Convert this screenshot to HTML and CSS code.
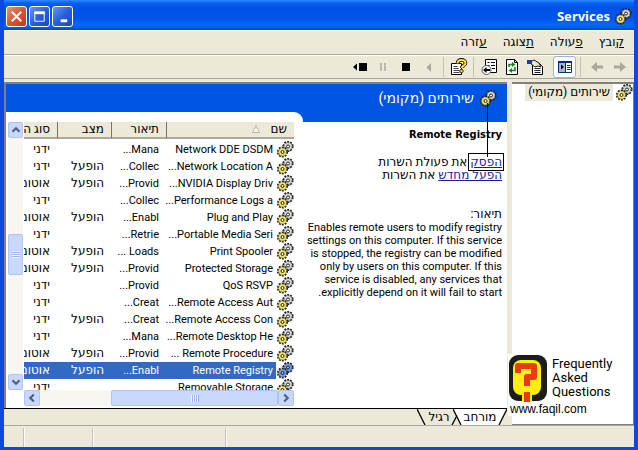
FILE: index.html
```html
<!DOCTYPE html>
<html lang="he" dir="rtl">
<head>
<meta charset="utf-8">
<title>Services</title>
<link rel="stylesheet" href="styles.css">
</head>
<body>
<svg class="defs" aria-hidden="true">
  <symbol id="gears" viewBox="0 0 17 17">
    <circle cx="11" cy="5.5" r="4.6" fill="none" stroke="#222" stroke-width="2" stroke-dasharray="1.8 1.1"/>
    <circle cx="11" cy="5.5" r="4" fill="#d8d8d8" stroke="#333" stroke-width=".7" stroke-dasharray="2 1"/>
    <circle cx="11" cy="5.5" r="1.5" fill="#fff" stroke="#222" stroke-width="1"/>
    <circle cx="5.5" cy="11" r="4.6" fill="none" stroke="#222" stroke-width="2" stroke-dasharray="1.8 1.1"/>
    <circle cx="5.5" cy="11" r="4" fill="#f3e35c" stroke="#55501a" stroke-width=".7" stroke-dasharray="2 1"/>
    <circle cx="5.5" cy="11" r="1.5" fill="#fff" stroke="#222" stroke-width="1"/>
  </symbol>
  <symbol id="chev" viewBox="0 0 10 10"><path d="M1.5 6.8 5 3.3l3.5 3.5" fill="none" stroke="#4d6185" stroke-width="2.2"/></symbol>
</svg>
<div class="window">
  <header class="titlebar">
    <svg class="gear"><use href="#gears"/></svg>
    <h1>Services</h1>
    <div class="winbtns">
      <button class="winbtn" aria-label="מזער"><svg viewBox="0 0 20 20"><path d="M8 14.5h7" stroke="#fff" stroke-width="3"/></svg></button>
      <button class="winbtn" aria-label="הגדל"><svg viewBox="0 0 20 20"><path d="M5 6h10v9H5z" fill="none" stroke="#fff"/><path d="M4.500 6h11" stroke="#fff" stroke-width="3"/></svg></button>
      <button class="winbtn close" aria-label="סגור"><svg viewBox="0 0 20 20"><path d="m5 5 10 10M15 5 5 15" stroke="#fff" stroke-width="2.200"/></svg></button>
    </div>
  </header>
  <nav class="menubar">
    <button><u>ק</u>ובץ</button><button><u>פ</u>עולה</button><button><u>ת</u>צוגה</button><button><u>ע</u>זרה</button>
  </nav>
  <div class="toolbar">
    <button aria-label="קדימה"><svg viewBox="0 0 18 18"><path d="M3 7.500h6V4l6 5-6 5v-3.500H3z" fill="#aca899"/></svg></button>
    <button aria-label="אחורה"><svg viewBox="0 0 18 18"><path d="M15 7.500H9V4L3 9l6 5v-3.500h6z" fill="#aca899"/></svg></button>
    <span class="sep"></span>
    <button class="pressed" aria-label="הצג עץ"><svg viewBox="0 0 18 18"><path d="M2.500 3.500h13v11h-13z" fill="#fff" stroke="#112a78"/><path d="M2 3h14v2H2z" fill="#112a78"/><path d="M3 5h6v9H3z" fill="#aab4cc"/><path d="M9.500 4v10" stroke="#112a78"/><path d="M5 6.500v5L8 9z" fill="#000"/><path d="M11 7.500h3.500M11 9.500h3.500M11 11.500h3.500" stroke="#112a78"/></svg></button>
    <span class="space"></span>
    <button aria-label="מאפיינים"><svg viewBox="0 0 18 18"><path d="M6.500 5.500h7l3 3v8h-10z" fill="#fff" stroke="#000"/><path d="M8.500 10.500h6M8.500 12.500h6M8.500 14.500h6" stroke="#222"/><path d="m4 4 4-2 5 3 2 4-3-1-3 1-4-3z" fill="#eee8cf" stroke="#000" stroke-width=".9"/><path d="M1 2h5v4H1z" fill="#1e3c99"/></svg></button>
    <button aria-label="רענן"><svg viewBox="0 0 18 18"><path d="M3.500 1.500h8l3 3v12h-11z" fill="#fff" stroke="#000"/><path d="M11.500 1.500v3h3" fill="none" stroke="#000"/><path d="M6 9V6.500h4M12 9v3.500H8" fill="none" stroke="#168416" stroke-width="1.600"/><path d="m9 4 3.500 2.500L9 9zM9 10l-3.500 2.500L9 15z" fill="#168416"/></svg></button>
    <button aria-label="יצא רשימה"><svg viewBox="0 0 18 18"><path d="M5.500 1.500h11v13h-11z" fill="#fff" stroke="#000"/><path d="M7.500 4.500h2M11 4.500h4M7.500 7.500h2M11 7.500h4M12 10.500h3" stroke="#000"/><circle cx="6.500" cy="12" r="4.500" fill="#fff" stroke="#555"/><path d="M3 12l3.500-3v2H10v2H6.500v2z" fill="#000"/></svg></button>
    <span class="sep tight"></span>
    <button aria-label="עזרה"><svg viewBox="0 0 18 18"><path d="M1.500 5.500h10v11h-10z" fill="#fff" stroke="#000"/><path d="M3.500 8.500h4M3.500 10.500h5M3.500 12.500h6M3.500 14.500h6" stroke="#444"/><path d="M7.500 5.500c0-5 8-4.500 8-.5 0 3-4 2.500-4 5" fill="none" stroke="#000" stroke-width="3.600"/><path d="M7.500 5.500c0-5 8-4.500 8-.5 0 3-4 2.500-4 5" fill="none" stroke="#ffe92e" stroke-width="2"/><circle cx="11.500" cy="13" r="1.700" fill="#ffe92e" stroke="#000" stroke-width=".8"/></svg></button>
    <span class="sep tight"></span>
    <button aria-label="הפעל"><svg viewBox="0 0 18 18"><path d="M11 5v9L6.500 9.500z" fill="#aca899"/></svg></button>
    <button aria-label="הפסק"><svg viewBox="0 0 18 18"><path d="M5 5h8v8H5z"/></svg></button>
    <button aria-label="השהה"><svg viewBox="0 0 18 18"><path d="M6 5h2v8H6zM10 5h2v8h-2z" fill="#bdb9aa"/></svg></button>
    <button aria-label="הפעל מחדש"><svg viewBox="0 0 18 18"><path d="M8 5h8v8H8zM6 5.500v7L2 9z"/></svg></button>
  </div>
  <div class="workspace">
    <aside class="tree">
      <div class="node"><svg class="gear"><use href="#gears"/></svg><span>שירותים (מקומי)</span></div>
    </aside>
    <main class="main">
      <div class="pane">
        <div class="banner"><svg class="gear"><use href="#gears"/></svg><h2>שירותים (מקומי)</h2></div>
        <div class="split">
          <section class="details">
            <h3>Remote Registry</h3>
            <p class="actions"><a href="#" class="marked">הפסק</a> את פעולת השרות<br><a href="#">הפעל מחדש</a> את השרות</p>
            <p><span class="label">תיאור:</span><br>Enables remote users to modify registry<br>settings on this computer. If this service<br>is stopped, the registry can be modified<br>only by users on this computer. If this<br>service is disabled, any services that<br>explicitly depend on it will fail to start.</p>
          </section>
          <section class="list">
            <div class="viewport">
              <table>
                <colgroup><col class="c-icon"><col><col class="c-desc"><col class="c-status"><col class="c-type"></colgroup>
                <thead><tr><th colspan="2">שם <svg class="sort" viewBox="0 0 8 8"><path d="M4 .5.500 7.500h7z" fill="#f6f4ea" stroke="#bbb7a5"/></svg></th><th>תיאור</th><th>מצב</th><th>סוג הפעלה</th></tr></thead>
                <tbody>
                  <tr><td><svg class="gear"><use href="#gears"/></svg></td><td>Network DDE DSDM</td><td>Mana...</td><td></td><td>ידני</td></tr>
                  <tr><td><svg class="gear"><use href="#gears"/></svg></td><td>Network Location A...</td><td>Collec...</td><td>הופעל</td><td>ידני</td></tr>
                  <tr><td><svg class="gear"><use href="#gears"/></svg></td><td>NVIDIA Display Driv...</td><td>Provid...</td><td>הופעל</td><td>אוטומטי</td></tr>
                  <tr><td><svg class="gear"><use href="#gears"/></svg></td><td>Performance Logs a...</td><td>Collec...</td><td></td><td>ידני</td></tr>
                  <tr><td><svg class="gear"><use href="#gears"/></svg></td><td>Plug and Play</td><td>Enabl...</td><td>הופעל</td><td>אוטומטי</td></tr>
                  <tr><td><svg class="gear"><use href="#gears"/></svg></td><td>Portable Media Seri...</td><td>Retrie...</td><td></td><td>ידני</td></tr>
                  <tr><td><svg class="gear"><use href="#gears"/></svg></td><td>Print Spooler</td><td>Loads ...</td><td>הופעל</td><td>אוטומטי</td></tr>
                  <tr><td><svg class="gear"><use href="#gears"/></svg></td><td>Protected Storage</td><td>Provid...</td><td>הופעל</td><td>אוטומטי</td></tr>
                  <tr><td><svg class="gear"><use href="#gears"/></svg></td><td>QoS RSVP</td><td>Provid...</td><td></td><td>ידני</td></tr>
                  <tr><td><svg class="gear"><use href="#gears"/></svg></td><td>Remote Access Aut...</td><td>Creat...</td><td></td><td>ידני</td></tr>
                  <tr><td><svg class="gear"><use href="#gears"/></svg></td><td>Remote Access Con...</td><td>Creat...</td><td>הופעל</td><td>ידני</td></tr>
                  <tr><td><svg class="gear"><use href="#gears"/></svg></td><td>Remote Desktop He...</td><td>Mana...</td><td></td><td>ידני</td></tr>
                  <tr><td><svg class="gear"><use href="#gears"/></svg></td><td>Remote Procedure ...</td><td>Provid...</td><td>הופעל</td><td>אוטומטי</td></tr>
                  <tr class="selected"><td><svg class="gear"><use href="#gears"/></svg></td><td>Remote Registry</td><td>Enabl...</td><td>הופעל</td><td>אוטומטי</td></tr>
                  <tr><td><svg class="gear"><use href="#gears"/></svg></td><td>Removable Storage</td><td></td><td></td><td>ידני</td></tr>
                </tbody>
              </table>
            </div>
            <div class="vscroll">
              <button aria-label="למעלה"><svg><use href="#chev"/></svg></button>
              <div class="before"></div>
              <div class="thumb"></div>
              <div class="after"></div>
              <button aria-label="למטה"><svg class="down"><use href="#chev"/></svg></button>
            </div>
            <div class="hscroll">
              <button aria-label="ימינה"><svg class="right"><use href="#chev"/></svg></button>
              <div class="thumb"></div>
              <div class="after"></div>
              <button aria-label="שמאלה"><svg class="left"><use href="#chev"/></svg></button>
            </div>
          </section>
        </div>
      </div>
      <div class="tabs">
        <button class="tab active"><svg viewBox="0 0 54 17" preserveAspectRatio="none"><path d="M0 0l8 17h38l8-17z" fill="#fff"/><path d="M0 0l8 17M54 0l-8 17" stroke="#000" stroke-width="1.300"/></svg><span>מורחב</span></button>
        <button class="tab"><svg viewBox="0 0 44 17" preserveAspectRatio="none"><path d="M0 0l8 17M40 7l-5 10" stroke="#000" stroke-width="1.300"/></svg><span>רגיל</span></button>
      </div>
    </main>
    <div class="logo">
      <div class="logo-row">
        <svg viewBox="0 0 40 48"><rect x="1" y="1" width="38" height="46" rx="9" fill="#1d1d1b"/><rect x="5" y="6" width="28" height="35" rx="8" fill="#ffee12"/><path d="M10 19v-7h16v11h-7v9" fill="none" stroke="#e63a1b" stroke-width="6" stroke-linejoin="round"/><path d="M14 37h10v11H14z" fill="#ffee12"/><path d="M16 38h6v10h-6z" fill="#e63a1b"/></svg>
        <span>Frequently<br>Asked<br>Questions</span>
      </div>
      <div class="url">www.faqil.com</div>
    </div>
  </div>
  <footer class="status"><span class="fill"></span><span class="s1"></span><span class="s2"></span><span class="s3"></span></footer>
</div>
</body>
</html>
```
FILE: styles.css
```css
* { box-sizing: border-box; }
body {
  margin: 0;
  font: 11px/13px Roboto, "DejaVu Sans", sans-serif;
  color: #000;
}
button { font: inherit; color: inherit; border: 0; padding: 0; background: none; }
h1, h2, h3, p { margin: 0; font-size: inherit; }
.defs { position: absolute; width: 0; height: 0; }
.gear { width: 17px; height: 17px; flex: none; display: block; }

.window {
  height: 100vh;
  min-height: 300px;
  display: flex;
  flex-direction: column;
  border: solid #0a4adf;
  border-width: 0 4px 3px;
  background: #ece9d8;
  overflow: hidden;
}

.titlebar {
  height: 30px;
  flex: none;
  display: flex;
  align-items: center;
  gap: 5px;
  margin: 0 -4px;
  padding: 2px 6px 0 6px;
  background: linear-gradient(#2f8cff 0, #0a60f0 3px, #0052e4 8px, #0054e8 18px, #0468fd 25px, #0558e8 28px, #0340c0 30px);
}
.titlebar h1 {
  font: bold 13px/16px "Noto Sans", sans-serif;
  color: #fff;
  flex: 1;
}
.winbtns { display: flex; gap: 2px; }
.winbtn {
  width: 21px;
  height: 21px;
  border: 1px solid #fff;
  border-radius: 3px;
  background: linear-gradient(135deg, #6c93ee, #2a5ede 50%, #1746c4);
}
.winbtn svg { display: block; width: 19px; height: 19px; }
.winbtn.close { background: linear-gradient(135deg, #ee9274, #dc5330 50%, #c23a14); }

.menubar {
  height: 25px;
  flex: none;
  display: flex;
  gap: 16px;
  padding: 0 10px;
  border-top: 1px solid #fff;
  border-bottom: 1px solid #aca899;
  font-size: 12px;
}
.toolbar {
  height: 24px;
  flex: none;
  display: flex;
  align-items: center;
  padding: 0 3px;
  border-top: 1px solid #fff;
  border-bottom: 1px solid #aca899;
}
.toolbar button { width: 23px; height: 22px; display: grid; place-items: center; }
.toolbar svg { width: 18px; height: 18px; }
.toolbar .pressed { border: 1px solid #98b5e2; border-radius: 3px; background: #fff; }
.sep { width: 1px; height: 20px; margin: 0 4px; background: #c5c2b2; }
.sep.tight { margin: 0 3px; }
.space { width: 7px; }

.workspace {
  flex: 1;
  min-height: 0;
  display: flex;
  gap: 5px;
  margin-top: 3px;
  position: relative;
}
.tree {
  width: 122px;
  flex: none;
  background: #fff;
  border: 1px solid #808080;
  border-width: 2px 1px 1px 0;
}
.node { display: flex; gap: 3px; font-size: 12px; }
.node span { background: #ece9d8; padding: 1px 3px; line-height: 14px; height: 17px; white-space: nowrap; }
.main { flex: 1; min-width: 0; display: flex; flex-direction: column; }
.pane {
  flex: 1;
  min-height: 0;
  display: flex;
  flex-direction: column;
  border: solid #808080;
  border-width: 2px 0 0 2px;
}
.banner {
  height: 28px;
  flex: none;
  display: flex;
  align-items: center;
  gap: 6px;
  padding-right: 10px;
  background: #0054e3;
  color: #fff;
}
.banner h2 { font-weight: normal; font-size: 14px; }
.split {
  flex: 1;
  min-height: 0;
  display: flex;
  background: linear-gradient(#0054e3 10px, #fff 10px);
}
.details { width: 204px; flex: none; padding: 16px 5px 0 0; white-space: nowrap; }
.details h3 { font-family: "DejaVu Sans Condensed", sans-serif; font-size: 11px; }
.actions, .label { font-size: 12px; }
.actions { margin: 15px 0 26px; }
.actions a { color: #1a1a9c; }
.actions .marked { position: relative; outline: 1px solid #000; outline-offset: 1px; }
.marked::after {
  content: "";
  position: absolute;
  right: 14px;
  bottom: 12px;
  width: 1px;
  height: 54px;
  background: #000;
}

.list {
  flex: 1;
  min-width: 0;
  display: grid;
  grid-template: minmax(0, 1fr) 16px / minmax(0, 1fr) 15px;
  column-gap: 1px;
  padding: 10px 9px 2px 2px;
  background: #fff;
  border-top-right-radius: 9px;
}
.viewport { overflow: hidden; }
table { width: calc(100% + 37px); border-collapse: separate; border-spacing: 0; table-layout: fixed; white-space: nowrap; }
.c-icon { width: 18px; }
.c-desc { width: 55px; }
.c-status { width: 54px; }
.c-type { width: 70px; }
th {
  height: 17px;
  padding: 0 7px 0 0;
  text-align: right;
  font-weight: normal;
  font-size: 12px;
  background: #ece9d8;
  border-bottom: 2px solid #aca899;
  border-left: 1px solid #77745f;
}
thead::after { content: ""; display: block; height: 2px; }
.sort { width: 8px; height: 8px; margin-right: 8px; }
td { height: 17px; padding: 0 7px 0 0; overflow: hidden; }
td:first-child { padding: 0; }
td:nth-child(2) { padding: 0 3px 0 0; }
td:nth-child(n+4) { font-size: 12px; }
.selected td:not(:first-child) { background: #316ac5; color: #fff; }
.selected .gear { filter: brightness(.6) sepia(1) hue-rotate(180deg) saturate(2); }

.vscroll, .hscroll { display: flex; background: #f7f6f0; }
.vscroll { flex-direction: column; }
.hscroll { grid-column: 1; }
.vscroll button, .hscroll button, .thumb {
  border: 1px solid #b0c4f4;
  border-radius: 2px;
  background: #c8d7fc;
  display: grid;
  place-items: center;
}
.vscroll button { height: 16px; }
.hscroll button { width: 16px; }
.vscroll svg, .hscroll svg { width: 10px; height: 10px; }
.down { transform: rotate(180deg); }
.right { transform: rotate(90deg); }
.left { transform: rotate(-90deg); }
.before { flex: 96; }
.vscroll .thumb { flex: 40; }
.vscroll .after { flex: 99; }
.hscroll .thumb { flex: 167; }
.hscroll .after { flex: 72; }
.thumb::after { content: ""; width: 8px; height: 7px; }
.vscroll .thumb::after { background: repeating-linear-gradient(#f4f8ff 0 1px, #9cb4ec 1px 2px); }
.hscroll .thumb::after { background: repeating-linear-gradient(90deg, #f4f8ff 0 1px, #9cb4ec 1px 2px); }

.tabs { height: 17px; flex: none; display: flex; border-top: 1px solid #000; font-size: 12px; }
.tab { position: relative; width: 44px; height: 16px; margin-right: -8px; }
.tab.active { width: 54px; margin: 0; }
.tab svg { position: absolute; inset: 0; width: 100%; height: 100%; }
.tab span { position: relative; }

.logo {
  position: absolute;
  right: 19px;
  bottom: 9px;
  width: 107px;
  background: #fff;
  font: 12px/14px "Liberation Sans", sans-serif;
}
.logo-row { direction: ltr; display: flex; gap: 4px; font: 13px/14px Roboto, sans-serif; }
.logo-row svg { width: 40px; height: 48px; flex: none; }
.logo-row span { padding-top: 3px; }
.url { direction: ltr; padding-left: 2px; }

.status { height: 22px; flex: none; display: flex; border-top: 1px solid #aca899; padding-top: 2px; }
.status span { border-left: 1px solid #c5c2b2; box-shadow: inset 1px 0 #fff; }
.status .fill { flex: 1; }
.s1 { width: 133px; }
.s2 { width: 69px; }
.status .s3 { width: 19px; border: 0; box-shadow: none; }
```
